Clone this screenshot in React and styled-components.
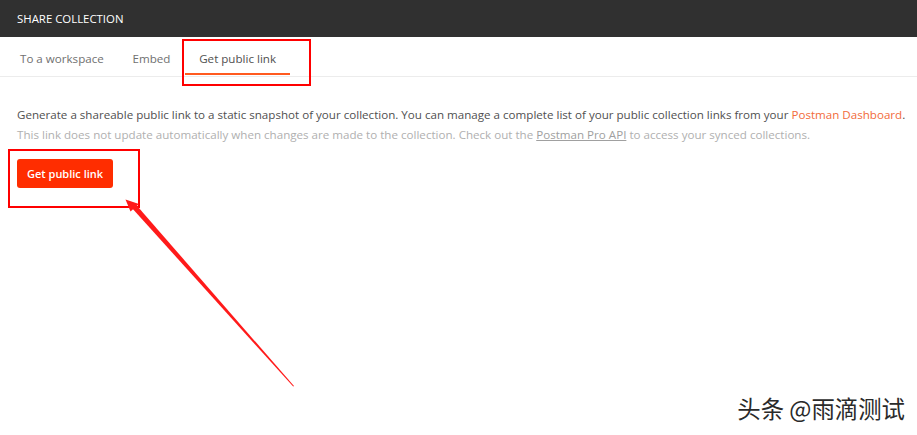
import React from "react";
import styled, { createGlobalStyle } from "styled-components";

const GlobalStyle = createGlobalStyle`
  html, body { margin: 0; padding: 0; background: #ffffff; }
  body { font-family: "Open Sans", "Noto Sans", sans-serif; }
  * { box-sizing: border-box; }
`;

const Page = styled.div`
  position: relative;
  width: 917px;
  height: 435px;
  overflow: hidden;
  background: #ffffff;
`;

const Header = styled.div`
  height: 37px;
  background: #303030;
  color: #ffffff;
  display: flex;
  align-items: center;
  padding: 0 17px;
  font-size: 11.4px;
  text-transform: uppercase;
`;

const TabBar = styled.div`
  display: flex;
  padding: 0 5px 1px;
  border-bottom: 1px solid #ececec;
`;

const Tab = styled.div`
  padding: 14px 14.4px 6px;
  line-height: 16px;
  font-size: 11.6px;
  color: ${(p) => (p.$active ? "#505050" : "#707070")};
  border-bottom: 2px solid ${(p) => (p.$active ? "#ff5a1f" : "transparent")};
  cursor: pointer;

  &:first-child {
    padding-left: 15px;
  }
`;

const Content = styled.div`
  padding: 28px 17px 0;
`;

const Text = styled.p`
  margin: 0;
  font-size: 11.6px;
  line-height: 20px;
  color: ${(p) => (p.$muted ? "#b0b0b0" : "#505050")};
  white-space: nowrap;
`;

const OrangeLink = styled.span`
  color: #f26b3a;
`;

const GrayLink = styled.span`
  color: #a0a0a0;
  text-decoration: underline;
`;

const Button = styled.button`
  margin-top: 14px;
  height: 29px;
  padding: 0 10px;
  border: none;
  border-radius: 3px;
  background: #ff2d00;
  color: #ffffff;
  font-family: "Open Sans", "Noto Sans", sans-serif;
  font-size: 11px;
  font-weight: 600;
  cursor: pointer;
`;

const Highlight = styled.div`
  position: absolute;
  border: 2px solid #ff0000;
  left: ${(p) => p.$x}px;
  top: ${(p) => p.$y}px;
  width: ${(p) => p.$w}px;
  height: ${(p) => p.$h}px;
  pointer-events: none;
`;

const ArrowSvg = styled.svg`
  position: absolute;
  left: 0;
  top: 0;
  pointer-events: none;
`;

const Watermark = styled.div`
  position: absolute;
  right: 12px;
  top: 393px;
  font-family: "Noto Sans CJK SC", "Noto Sans", sans-serif;
  font-size: 23.4px;
  line-height: 30px;
  color: #2a2a2a;
  text-shadow: 1px 1px 0 #ffffff, -1px -1px 0 #ffffff, 1px -1px 0 #ffffff, -1px 1px 0 #ffffff;
  white-space: nowrap;
`;

export default function App() {
  const tabs = ["To a workspace", "Embed", "Get public link"];
  return (
    <>
      <GlobalStyle />
      <Page>
        <Header>Share Collection</Header>
        <TabBar>
          {tabs.map((t) => (
            <Tab key={t} $active={t === "Get public link"}>
              {t}
            </Tab>
          ))}
        </TabBar>
        <Content>
          <Text>
            Generate a shareable public link to a static snapshot of your collection. You can manage a complete list of your public collection links from your{" "}
            <OrangeLink>Postman Dashboard</OrangeLink>.
          </Text>
          <Text $muted>
            This link does not update automatically when changes are made to the collection. Check out the{" "}
            <GrayLink>Postman Pro API</GrayLink> to access your synced collections.
          </Text>
          <Button>Get public link</Button>
        </Content>

        <Highlight $x={182} $y={39} $w={129} $h={47} />
        <Highlight $x={8} $y={149} $w={132} $h={59} />
        <ArrowSvg width="917" height="435" viewBox="0 0 917 435">
          <polygon points="294,386 293.2,386.6 131,207 135,203.5" fill="#ff1a1a" />
          <polygon points="125.5,199.5 139,204 130.5,211.5" fill="#ff1a1a" />
        </ArrowSvg>
        <Watermark>头条 @雨滴测试</Watermark>
      </Page>
    </>
  );
}
